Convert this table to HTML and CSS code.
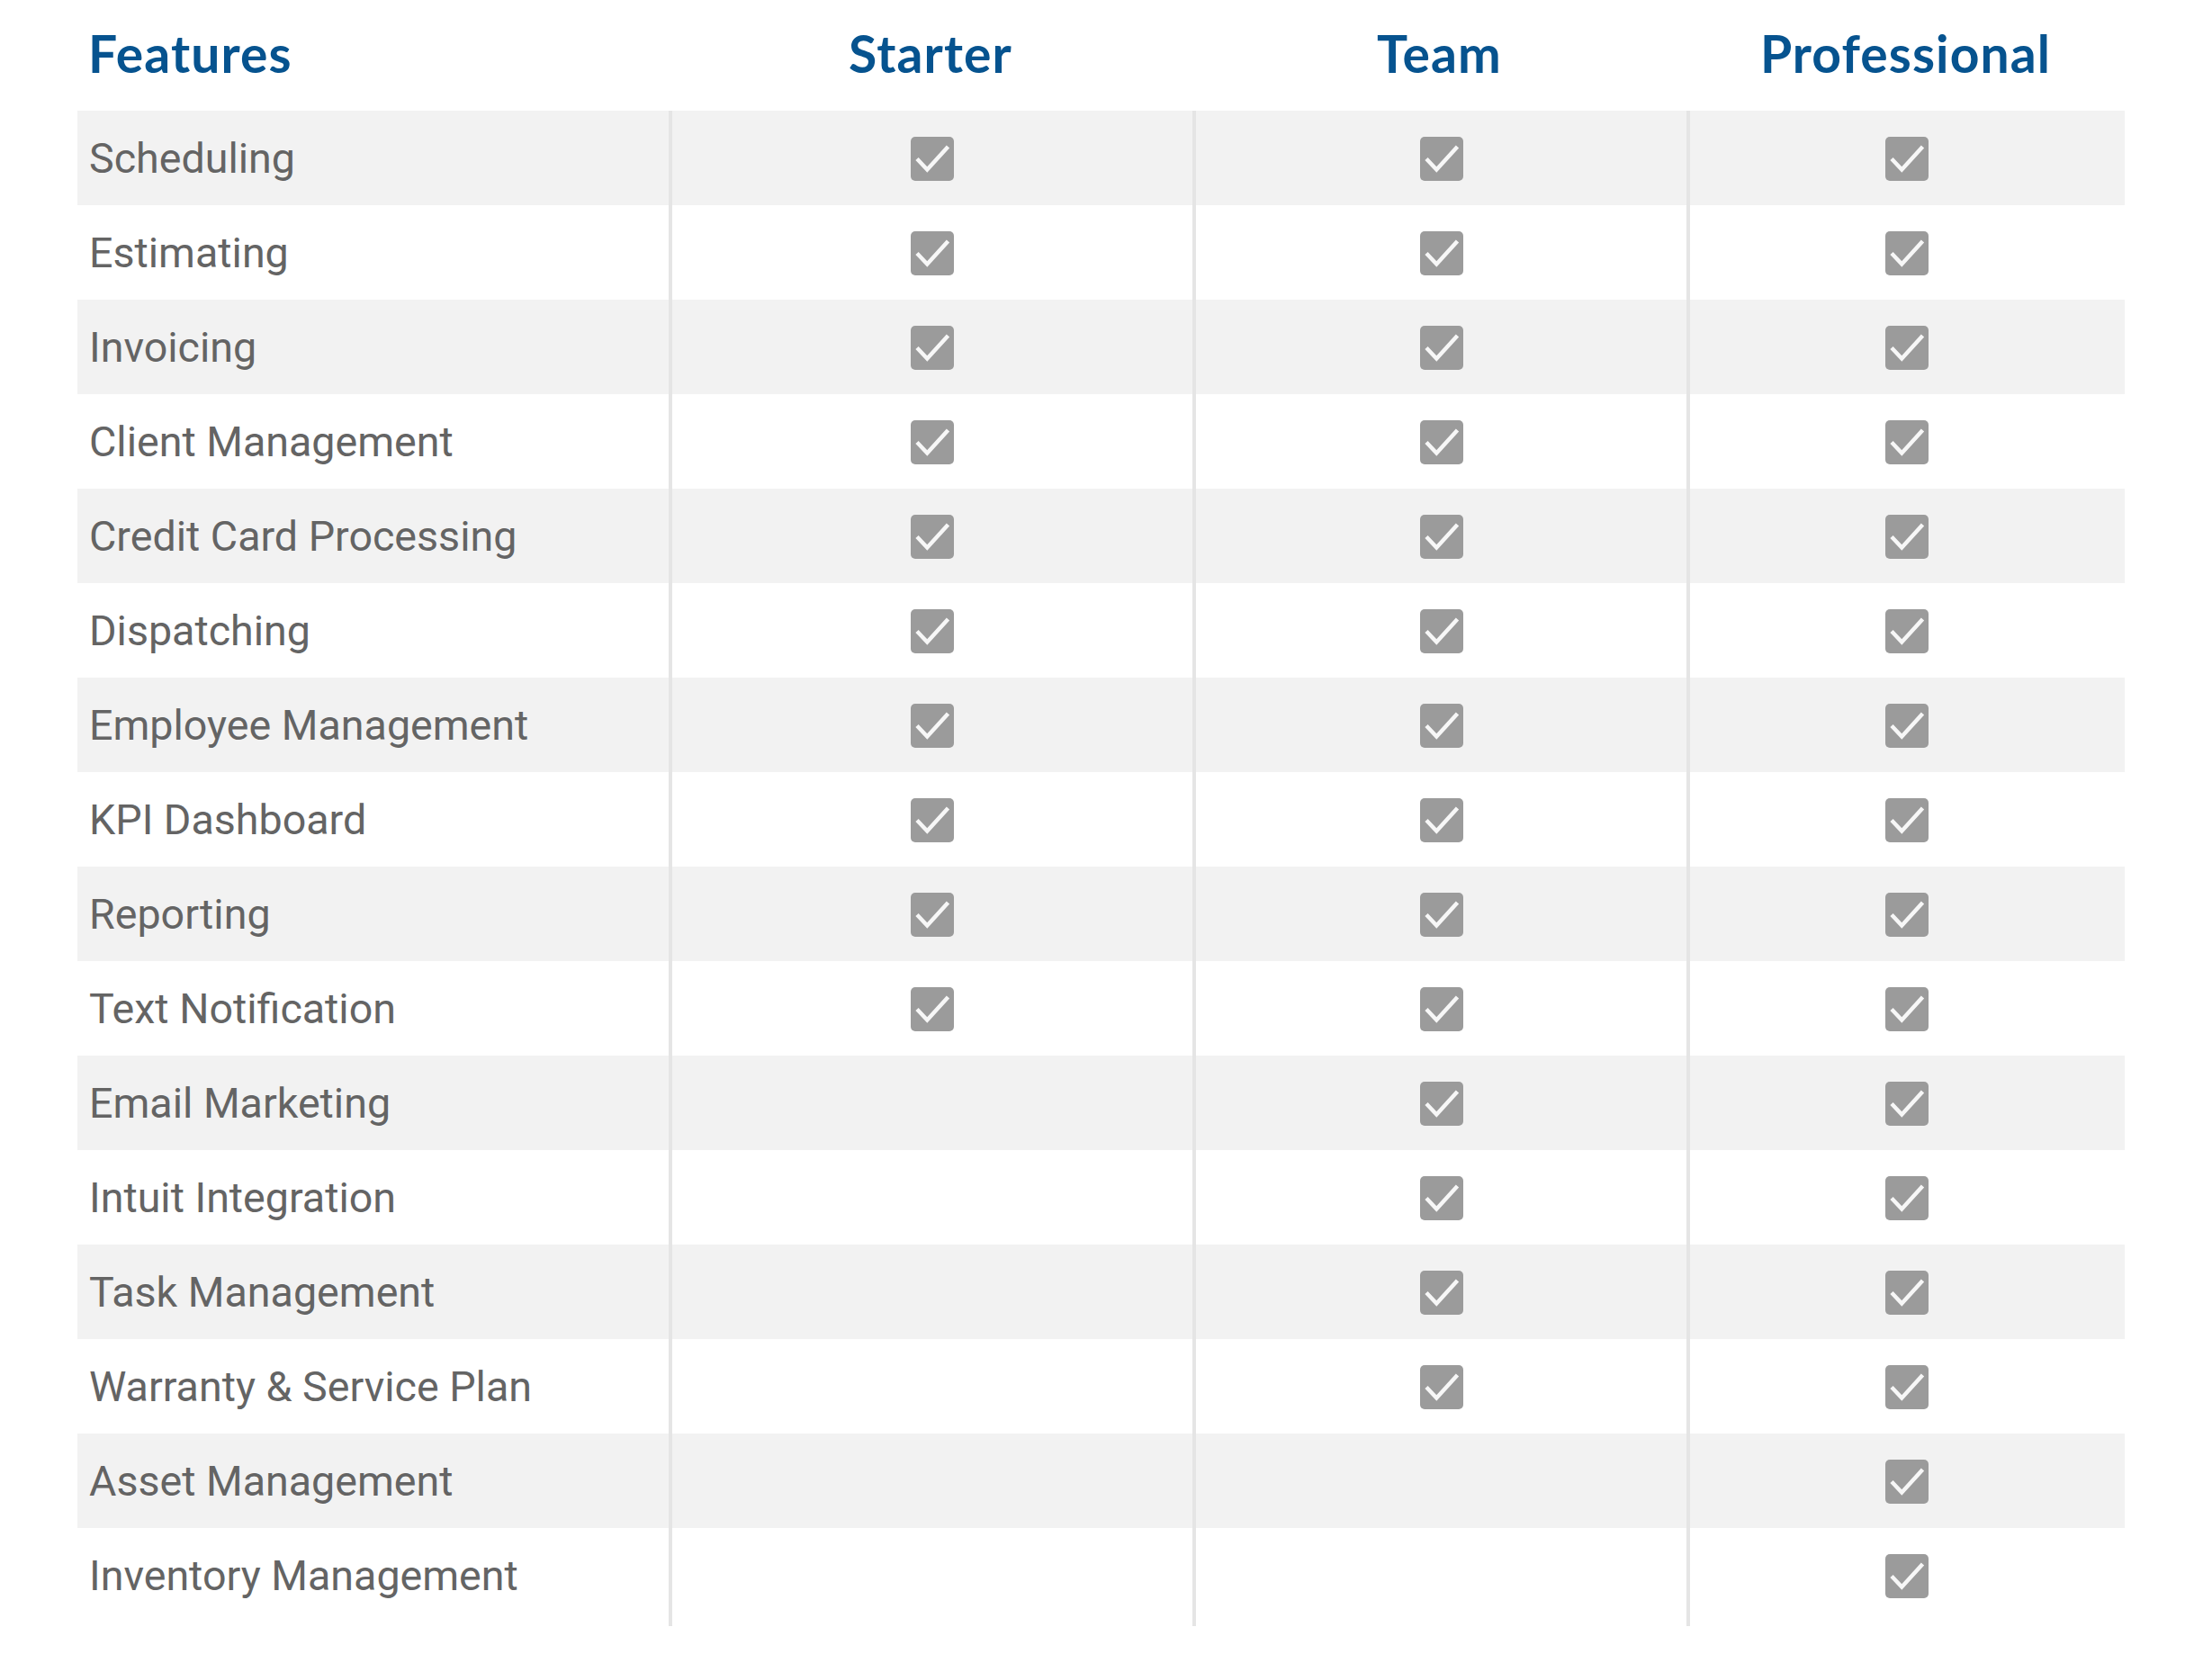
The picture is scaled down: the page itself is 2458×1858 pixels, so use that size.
FILE: index.html
```html
<!DOCTYPE html>
<html lang="en">
<head>
<meta charset="utf-8">
<title>Features</title>
<link rel="stylesheet" href="styles.css">
</head>
<body>
<svg width="0" height="0" class="defs">
  <defs>
    <symbol id="chk" viewBox="0 0 48 49">
      <rect x="0" y="0" width="48" height="49" rx="5" ry="5" fill="#9b9b9b"/>
      <path d="M7 24.5 L18.3 36.5 L41.5 11" fill="none" stroke="#f7f7f7" stroke-width="4.5" stroke-linecap="butt" stroke-linejoin="miter"/>
    </symbol>
  </defs>
</svg>
<div class="table">
  <div class="row head">
    <div class="cell feat">Features</div>
    <div class="cell plan">Starter</div>
    <div class="cell plan">Team</div>
    <div class="cell plan">Professional</div>
  </div>
  <div class="body">
    <div class="row alt"><div class="cell feat">Scheduling</div><div class="cell c"><svg class="ck"><use href="#chk"/></svg></div><div class="cell c"><svg class="ck"><use href="#chk"/></svg></div><div class="cell c"><svg class="ck"><use href="#chk"/></svg></div></div>
    <div class="row"><div class="cell feat">Estimating</div><div class="cell c"><svg class="ck"><use href="#chk"/></svg></div><div class="cell c"><svg class="ck"><use href="#chk"/></svg></div><div class="cell c"><svg class="ck"><use href="#chk"/></svg></div></div>
    <div class="row alt"><div class="cell feat">Invoicing</div><div class="cell c"><svg class="ck"><use href="#chk"/></svg></div><div class="cell c"><svg class="ck"><use href="#chk"/></svg></div><div class="cell c"><svg class="ck"><use href="#chk"/></svg></div></div>
    <div class="row"><div class="cell feat">Client Management</div><div class="cell c"><svg class="ck"><use href="#chk"/></svg></div><div class="cell c"><svg class="ck"><use href="#chk"/></svg></div><div class="cell c"><svg class="ck"><use href="#chk"/></svg></div></div>
    <div class="row alt"><div class="cell feat">Credit Card Processing</div><div class="cell c"><svg class="ck"><use href="#chk"/></svg></div><div class="cell c"><svg class="ck"><use href="#chk"/></svg></div><div class="cell c"><svg class="ck"><use href="#chk"/></svg></div></div>
    <div class="row"><div class="cell feat">Dispatching</div><div class="cell c"><svg class="ck"><use href="#chk"/></svg></div><div class="cell c"><svg class="ck"><use href="#chk"/></svg></div><div class="cell c"><svg class="ck"><use href="#chk"/></svg></div></div>
    <div class="row alt"><div class="cell feat">Employee Management</div><div class="cell c"><svg class="ck"><use href="#chk"/></svg></div><div class="cell c"><svg class="ck"><use href="#chk"/></svg></div><div class="cell c"><svg class="ck"><use href="#chk"/></svg></div></div>
    <div class="row"><div class="cell feat">KPI Dashboard</div><div class="cell c"><svg class="ck"><use href="#chk"/></svg></div><div class="cell c"><svg class="ck"><use href="#chk"/></svg></div><div class="cell c"><svg class="ck"><use href="#chk"/></svg></div></div>
    <div class="row alt"><div class="cell feat">Reporting</div><div class="cell c"><svg class="ck"><use href="#chk"/></svg></div><div class="cell c"><svg class="ck"><use href="#chk"/></svg></div><div class="cell c"><svg class="ck"><use href="#chk"/></svg></div></div>
    <div class="row"><div class="cell feat">Text Notification</div><div class="cell c"><svg class="ck"><use href="#chk"/></svg></div><div class="cell c"><svg class="ck"><use href="#chk"/></svg></div><div class="cell c"><svg class="ck"><use href="#chk"/></svg></div></div>
    <div class="row alt"><div class="cell feat">Email Marketing</div><div class="cell c"></div><div class="cell c"><svg class="ck"><use href="#chk"/></svg></div><div class="cell c"><svg class="ck"><use href="#chk"/></svg></div></div>
    <div class="row"><div class="cell feat">Intuit Integration</div><div class="cell c"></div><div class="cell c"><svg class="ck"><use href="#chk"/></svg></div><div class="cell c"><svg class="ck"><use href="#chk"/></svg></div></div>
    <div class="row alt"><div class="cell feat">Task Management</div><div class="cell c"></div><div class="cell c"><svg class="ck"><use href="#chk"/></svg></div><div class="cell c"><svg class="ck"><use href="#chk"/></svg></div></div>
    <div class="row"><div class="cell feat">Warranty &amp; Service Plan</div><div class="cell c"></div><div class="cell c"><svg class="ck"><use href="#chk"/></svg></div><div class="cell c"><svg class="ck"><use href="#chk"/></svg></div></div>
    <div class="row alt"><div class="cell feat">Asset Management</div><div class="cell c"></div><div class="cell c"></div><div class="cell c"><svg class="ck"><use href="#chk"/></svg></div></div>
    <div class="row last"><div class="cell feat">Inventory Management</div><div class="cell c"></div><div class="cell c"></div><div class="cell c"><svg class="ck"><use href="#chk"/></svg></div></div>
  </div>
</div>
</body>
</html>
```
FILE: styles.css
```css
html, body {
  margin: 0;
  padding: 0;
  background: #ffffff;
}

.defs {
  position: absolute;
  width: 0;
  height: 0;
  overflow: hidden;
}

.table {
  width: 2275px;
  margin-left: 86px;
  font-family: Roboto, "Liberation Sans", sans-serif;
}

.row {
  display: grid;
  grid-template-columns: 657px 582px 549px 487px;
  height: 105px;
}

.row.alt {
  background: #f2f2f2;
}

.row.last {
  height: 109px;
}

.row.head {
  height: 123px;
  background: transparent;
}

.head .cell {
  font-family: Lato, "Open Sans", sans-serif;
  font-weight: 700;
  font-size: 57px;
  letter-spacing: 1.1px;
  line-height: 56px;
  color: #06538f;
  padding-top: 31px;
  border-left: none;
  box-sizing: border-box;
}

.head .feat {
  padding-left: 12px;
}

.head .plan {
  text-align: center;
  padding-left: 0;
}

.cell {
  box-sizing: border-box;
}

.body .cell + .cell {
  border-left: 4px solid #e5e5e5;
}

.body .feat {
  display: flex;
  align-items: center;
  padding-left: 13px;
  font-size: 46.6px;
  color: #646464;
}

.c {
  display: flex;
  align-items: center;
  justify-content: center;
}

.c:last-child {
  padding-right: 2px;
}

.last .c {
  padding-bottom: 4px;
}

.last .feat {
  padding-bottom: 4px;
}

.ck {
  width: 48px;
  height: 49px;
  margin-top: 2px;
}
```
